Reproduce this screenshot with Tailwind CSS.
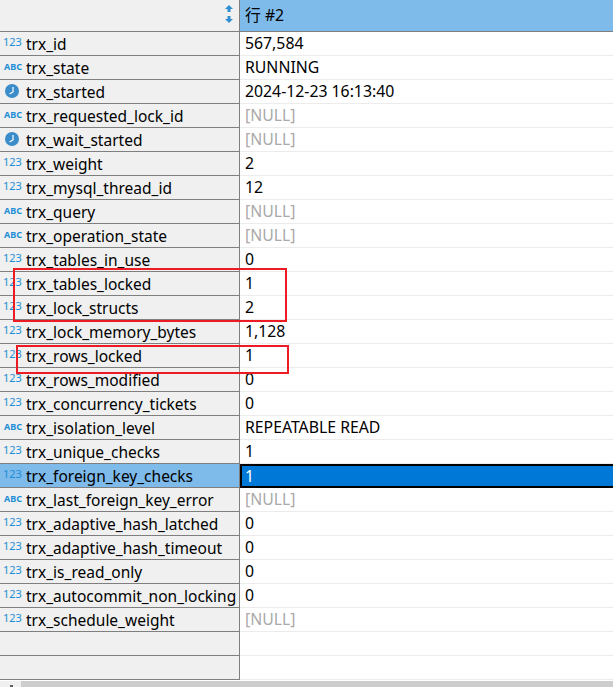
<!DOCTYPE html>
<html lang="zh">
<head>
  <meta charset="UTF-8" />
  <title>trx</title>
  <script src="https://cdn.jsdelivr.net/npm/@tailwindcss/browser@4"></script>
</head>
<body class="bg-white overflow-hidden">
  <div class="relative w-[613px] h-[687px] overflow-hidden font-['Noto_Sans','Noto_Sans_CJK_SC',sans-serif] text-[15.500px] text-black">
    <!-- header -->
    <div class="flex h-8">
      <div class="w-[240px] h-8 bg-[#f0f0f0] border-r border-b border-[#7f7f7f] flex items-center justify-end pr-[5px]">
        <svg width="10" height="18" viewBox="0 0 10 18" class="mb-[4px]">
          <path d="M5 0 9 4H6.500V7H3.500V4H1Z M3.500 11H6.500V14H9L5 18 1 14H3.500Z" fill="#2f8fd0" />
        </svg>
      </div>
      <div class="flex-1 h-8 bg-[#7ebaea] border-b border-[#7f7f7f] flex items-center pl-[5px] text-[15.800px]">行 #2</div>
    </div>
    <div id="rows"></div>
    <!-- red marks -->
    <div class="absolute left-[13px] top-[268px] w-[274px] h-[54px] border-2 border-[#ed1c24]"></div>
    <div class="absolute left-[16px] top-[345px] w-[273px] h-[29px] border-2 border-[#ed1c24]"></div>
    <!-- scrollbar -->
    <div class="absolute left-0 top-[681px] w-[613px] h-[6px] bg-[#f0f0f0]">
      <div class="absolute left-[10px] top-[4px] w-[3px] h-[2px] bg-[#606060]"></div>
      <div class="ml-[21px] h-[6px] bg-[#cdcdcd]"></div>
    </div>
  </div>
  <script>
    const num = '<span class="w-[26px] shrink-0 pl-[3px] text-[11px] leading-none text-[#1c8fd6] mb-[4px]">123</span>';
    const abc = '<span class="w-[26px] shrink-0 pl-[4px] text-[9px] font-bold leading-none text-[#1c8fd6] mb-[3px]">ABC</span>';
    const clock = '<span class="w-[26px] shrink-0 pl-[5px] mb-[2px]"><svg width="14" height="14" viewBox="0 0 14 14" class="block"><circle cx="7" cy="7" r="7" fill="#3a8cca"/><path d="M8 3V8L4.500 10" fill="none" stroke="#fff" stroke-width="1.200"/></svg></span>';
    const rows = [
      [num, 'trx_id', '567,584'],
      [abc, 'trx_state', 'RUNNING'],
      [clock, 'trx_started', '2024-12-23 16:13:40'],
      [abc, 'trx_requested_lock_id', null],
      [clock, 'trx_wait_started', null],
      [num, 'trx_weight', '2'],
      [num, 'trx_mysql_thread_id', '12'],
      [abc, 'trx_query', null],
      [abc, 'trx_operation_state', null],
      [num, 'trx_tables_in_use', '0'],
      [num, 'trx_tables_locked', '1'],
      [num, 'trx_lock_structs', '2'],
      [num, 'trx_lock_memory_bytes', '1,128'],
      [num, 'trx_rows_locked', '1'],
      [num, 'trx_rows_modified', '0'],
      [num, 'trx_concurrency_tickets', '0'],
      [abc, 'trx_isolation_level', 'REPEATABLE READ'],
      [num, 'trx_unique_checks', '1'],
      [num, 'trx_foreign_key_checks', '1', true],
      [abc, 'trx_last_foreign_key_error', null],
      [num, 'trx_adaptive_hash_latched', '0'],
      [num, 'trx_adaptive_hash_timeout', '0'],
      [num, 'trx_is_read_only', '0'],
      [num, 'trx_autocommit_non_locking', '0'],
      [num, 'trx_schedule_weight', null],
      ['', '', ''],
      ['', '', '']
    ];
    document.getElementById('rows').innerHTML = rows.map(([icon, name, val, sel]) => {
      const left = sel ? 'bg-[#7ebaea]' : 'bg-[#f0f0f0]';
      let right = 'border-b border-[#ececec] pl-[5px] pt-[1px]';
      if (sel) right = 'bg-[#0078d7] border-y-2 border-l-2 border-black text-white pl-[3px] pt-[1px]';
      const text = val === null ? '<span class="text-[#a9a9a9]">[NULL]</span>' : val;
      return `<div class="flex h-6">
        <div class="w-[240px] h-6 ${left} border-r border-b border-[#7f7f7f] flex items-center whitespace-nowrap overflow-hidden"><span class="contents">${icon}</span><span class="pt-[2px]">${name}</span></div>
        <div class="flex-1 h-6 flex items-center text-[15.800px] ${right}">${text}</div>
      </div>`;
    }).join('');
  </script>
</body>
</html>
